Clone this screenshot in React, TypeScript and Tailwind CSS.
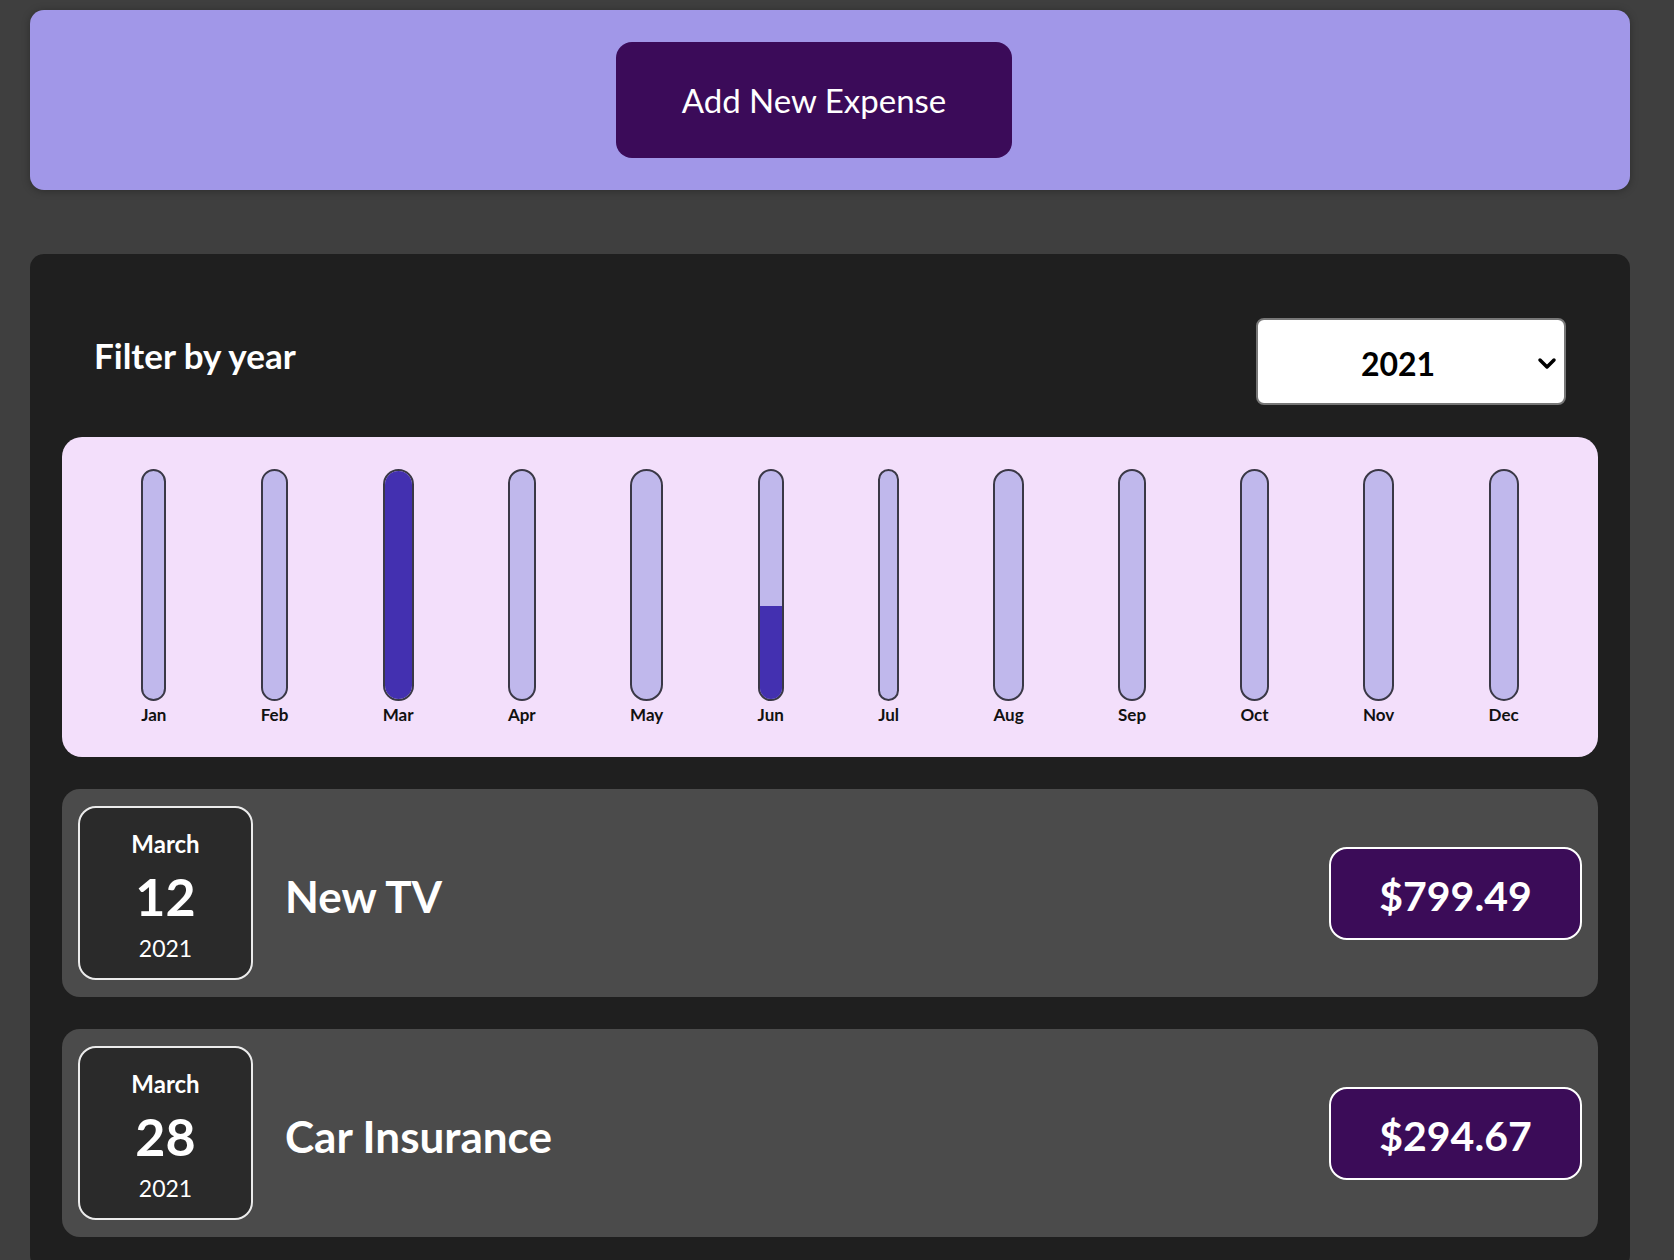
const months = [
  { label: 'Jan', value: 0 },
  { label: 'Feb', value: 0 },
  { label: 'Mar', value: 100 },
  { label: 'Apr', value: 0 },
  { label: 'May', value: 0 },
  { label: 'Jun', value: 41 },
  { label: 'Jul', value: 0 },
  { label: 'Aug', value: 0 },
  { label: 'Sep', value: 0 },
  { label: 'Oct', value: 0 },
  { label: 'Nov', value: 0 },
  { label: 'Dec', value: 0 },
]

const expenses = [
  { month: 'March', day: '12', year: '2021', title: 'New TV', amount: '$799.49' },
  { month: 'March', day: '28', year: '2021', title: 'Car Insurance', amount: '$294.67' },
]

function ChartBar({ label, value }: { label: string; value: number }) {
  return (
    <div className="flex h-full flex-col items-center">
      <div className="flex w-full flex-1 flex-col justify-end overflow-hidden rounded-full border-2 border-[#3a3846] bg-[#c0b8ec]">
        <div className="bg-[#4330b0]" style={{ height: `${value}%` }} />
      </div>
      <div className="pt-[4px] text-[17px] font-bold leading-[20px] text-[#111]">{label}</div>
    </div>
  )
}

function ExpenseItem({ month, day, year, title, amount }: (typeof expenses)[number]) {
  return (
    <div className="flex h-[208px] items-center rounded-[18px] bg-[#4b4b4b] px-4">
      <div className="flex h-[174px] w-[175px] flex-col items-center justify-center rounded-[18px] border-2 border-[#ececec] bg-[#2a2a2a] pt-[6px] text-white">
        <div className="text-[24px] font-bold leading-[30px]">{month}</div>
        <div className="text-[52px] font-bold leading-[74px]">{day}</div>
        <div className="text-[23px] leading-[30px]">{year}</div>
      </div>
      <h2 className="ml-8 pt-[6px] text-[44px] font-bold text-white">{title}</h2>
      <div className="ml-auto flex h-[93px] w-[253px] items-center justify-center rounded-[18px] border-2 border-white bg-[#3b0c58] pt-[6px] text-[41px] font-bold text-white">
        {amount}
      </div>
    </div>
  )
}

export default function App() {
  return (
    <main className="min-h-screen bg-[#3f3f3f] pt-[10px] font-['Lato',sans-serif]">
      <div className="ml-[30px] w-[1600px]">
        <section className="flex justify-center rounded-[14px] bg-[#a197e8] py-8 pr-8 shadow-[0_1px_8px_rgba(0,0,0,0.3)]">
          <button className="h-[116px] w-[396px] rounded-2xl bg-[#3b0b59] pt-[2px] text-[33px] text-white">
            Add New Expense
          </button>
        </section>

        <section className="mt-16 rounded-[14px] bg-[#1f1f1f] px-8 pb-8 pt-16">
          <div className="mb-8 flex items-center justify-between px-8">
            <label className="pb-3 text-[35px] font-bold text-white">Filter by year</label>
            <div className="relative flex h-[87px] w-[310px] items-center justify-center rounded-lg border-2 border-[#777] bg-white pr-[26px] pt-[5px]">
              <span className="text-[32px] font-bold text-black">2021</span>
              <svg className="absolute right-[7px] top-[37px]" width="20" height="13" viewBox="0 0 20 13">
                <path d="M3 3 L10 10 L17 3" fill="none" stroke="black" strokeWidth="3.5" strokeLinecap="round" strokeLinejoin="round" />
              </svg>
            </div>
          </div>

          <div className="flex h-[320px] justify-around rounded-[20px] bg-[#f3dffb] p-8">
            {months.map((m) => (
              <ChartBar key={m.label} label={m.label} value={m.value} />
            ))}
          </div>

          <div className="mt-8 flex flex-col gap-8">
            {expenses.map((e) => (
              <ExpenseItem key={e.title} {...e} />
            ))}
          </div>
        </section>
      </div>
    </main>
  )
}
